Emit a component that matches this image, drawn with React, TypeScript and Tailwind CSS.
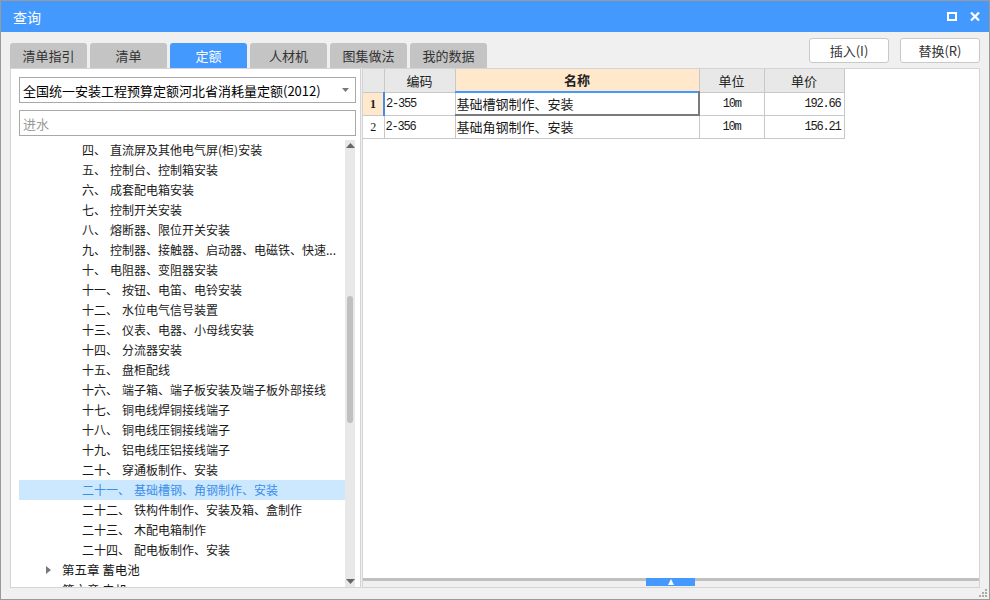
import React from "react";

const tabs = ["清单指引", "清单", "定额", "人材机", "图集做法", "我的数据"];

const tree: [string, string][] = [
  ["四、", "直流屏及其他电气屏(柜)安装"],
  ["五、", "控制台、控制箱安装"],
  ["六、", "成套配电箱安装"],
  ["七、", "控制开关安装"],
  ["八、", "熔断器、限位开关安装"],
  ["九、", "控制器、接触器、启动器、电磁铁、快速..."],
  ["十、", "电阻器、变阻器安装"],
  ["十一、", "按钮、电笛、电铃安装"],
  ["十二、", "水位电气信号装置"],
  ["十三、", "仪表、电器、小母线安装"],
  ["十四、", "分流器安装"],
  ["十五、", "盘柜配线"],
  ["十六、", "端子箱、端子板安装及端子板外部接线"],
  ["十七、", "铜电线焊铜接线端子"],
  ["十八、", "铜电线压铜接线端子"],
  ["十九、", "铝电线压铝接线端子"],
  ["二十、", "穿通板制作、安装"],
  ["二十一、", "基础槽钢、角钢制作、安装"],
  ["二十二、", "铁构件制作、安装及箱、盒制作"],
  ["二十三、", "木配电箱制作"],
  ["二十四、", "配电板制作、安装"],
];

const ui = { fontFamily: '"Noto Sans CJK SC", "Noto Sans", sans-serif' };
const mono = { fontFamily: '"Liberation Mono", "Noto Sans CJK SC", monospace' };

export default function App() {
  return (
    <div
      className="w-[990px] h-[600px] flex flex-col bg-[#f0f0f0] border border-[#9a9a9a] overflow-hidden text-[#1a1a1a]"
      style={ui}
    >
      {/* title bar */}
      <div className="h-[31px] shrink-0 bg-[#4499ff] flex items-center justify-between pl-[12px] pr-[9px]">
        <span className="text-white text-[14px] leading-none">查询</span>
        <div className="flex items-center gap-[13px]">
          <svg width="10" height="9" viewBox="0 0 10 9">
            <rect x="1" y="1" width="8" height="7" fill="none" stroke="white" strokeWidth="2" />
          </svg>
          <svg width="10" height="9" viewBox="0 0 10 9">
            <path d="M1 0.5 L9 8.5 M9 0.5 L1 8.5" stroke="white" strokeWidth="2.2" />
          </svg>
        </div>
      </div>

      {/* tabs + buttons */}
      <div className="h-[36px] shrink-0 flex justify-between pl-[9px] pr-[9px]">
        <div className="flex items-end gap-[3px]">
          {tabs.map((t) => (
            <div
              key={t}
              className={
                "w-[77px] h-[25px] rounded-t-[3px] flex items-center justify-center text-[13px] " +
                (t === "定额" ? "bg-[#4499ff] text-white" : "bg-[#c4c4c4] text-[#333]")
              }
            >
              {t}
            </div>
          ))}
        </div>
        <div className="flex gap-[11px] pt-[6px]">
          <div className="w-[80px] h-[25px] bg-white border border-[#c8c8c8] rounded-[3px] flex items-center justify-center text-[13px] text-[#333]">
            插入(I)
          </div>
          <div className="w-[80px] h-[25px] bg-white border border-[#c8c8c8] rounded-[3px] flex items-center justify-center text-[13px] text-[#333]">
            替换(R)
          </div>
        </div>
      </div>

      {/* main */}
      <div className="h-[520px] shrink-0 flex pl-[9px] pr-[9px] gap-[1px]">
        {/* left panel */}
        <div className="w-[351px] h-full bg-white border border-[#d4d4d4] flex flex-col pl-[8px] pr-[4px] pt-[8px]">
          <div className="h-[26px] shrink-0 border border-[#a8a8a8] flex items-center justify-between pl-[3px] pr-[6px]">
            <span className="text-[13px] text-black leading-none">全国统一安装工程预算定额河北省消耗量定额(2012)</span>
            <svg width="7" height="4" viewBox="0 0 7 4">
              <path d="M0 0 H7 L3.5 4 Z" fill="#777" />
            </svg>
          </div>
          <div className="h-[26px] mt-[7px] shrink-0 border border-[#a8a8a8] flex items-center pl-[3px]">
            <span className="text-[13px] text-[#999] leading-none">进水</span>
          </div>
          <div className="mt-[4px] flex-1 flex overflow-hidden">
            <div className="w-[326px] flex flex-col overflow-hidden">
              {tree.map(([n, t]) => {
                const sel = n === "二十一、";
                return (
                  <div
                    key={n}
                    className={
                      "h-[20px] shrink-0 flex items-center pl-[63px] text-[12px] whitespace-nowrap " +
                      (sel ? "bg-[#cce8ff] text-[#3d8ee8]" : "text-[#1a1a1a]")
                    }
                  >
                    <span>{n}</span>
                    <span className="ml-[4px]">{t}</span>
                  </div>
                );
              })}
              <div className="h-[20px] shrink-0 flex items-center pl-[27px] text-[12.5px] whitespace-nowrap">
                <svg width="5" height="8" viewBox="0 0 5 8" className="mr-[11px]">
                  <path d="M0 0 L5 4 L0 8 Z" fill="#777" />
                </svg>
                第五章 蓄电池
              </div>
              <div className="h-[20px] shrink-0 flex items-center pl-[43px] text-[12.5px] whitespace-nowrap">
                第六章 电机
              </div>
            </div>
            {/* scrollbar */}
            <div className="w-[10px] h-full bg-[#e8e8e8] flex flex-col items-center">
              <svg width="9" height="5" viewBox="0 0 9 5" className="mt-[3px]">
                <path d="M0 5 L4.5 0 L9 5 Z" fill="#666" />
              </svg>
              <div className="mt-[148px] w-[6px] h-[127px] bg-[#c0c0c0] rounded-[3px]" />
              <div className="flex-1" />
              <svg width="9" height="5" viewBox="0 0 9 5" className="mb-[3px]">
                <path d="M0 0 L9 0 L4.5 5 Z" fill="#666" />
              </svg>
            </div>
          </div>
        </div>

        {/* right panel */}
        <div className="flex-1 h-full border border-[#d4d4d4] flex flex-col">
          <div className="flex-1 bg-white">
            <table className="border-collapse text-[13px]" style={{ tableLayout: "fixed" }}>
              <colgroup>
                <col style={{ width: 21 }} />
                <col style={{ width: 71 }} />
                <col style={{ width: 244 }} />
                <col style={{ width: 65 }} />
                <col style={{ width: 80 }} />
              </colgroup>
              <thead>
                <tr className="h-[23px]">
                  <th className="bg-[#e8e8e8] border border-[#c8c8c8] border-t-0 border-l-0 p-0" />
                  <th className="bg-[#e8e8e8] border border-[#c8c8c8] border-t-0 font-normal p-0 text-[#222]">编码</th>
                  <th className="bg-[#ffe8cc] border border-[#c8c8c8] border-t-0 font-bold p-0 text-[#222]">名称</th>
                  <th className="bg-[#e8e8e8] border border-[#c8c8c8] border-t-0 font-normal p-0 text-[#222]">单位</th>
                  <th className="bg-[#e8e8e8] border border-[#c8c8c8] border-t-0 font-normal p-0 text-[#222]">单价</th>
                </tr>
              </thead>
              <tbody>
                <tr className="h-[23px]">
                  <td className="bg-[#ffe8cc] border border-[#c8c8c8] border-l-0 p-0 text-center font-bold text-[12px]" style={{ fontFamily: '"Liberation Serif", serif' }}>1</td>
                  <td className="border border-[#c8c8c8] border-l-2 border-l-[#3d8ee8] p-0 pl-[1px] text-[12px] tracking-[-1.2px]" style={mono}>2-355</td>
                  <td className="p-0 pl-[1px] border-t-2 border-t-[#4499ff] border-l border-l-[#808080] border-r-2 border-r-[#7a7a7a] border-b-2 border-b-[#7a7a7a]">基础槽钢制作、安装</td>
                  <td className="border border-[#c8c8c8] p-0 text-center text-[12px] tracking-[-1.2px]" style={mono}>10m</td>
                  <td className="border border-[#c8c8c8] p-0 pr-[3px] text-right text-[12px] tracking-[-1.2px]" style={mono}>192.66</td>
                </tr>
                <tr className="h-[23px]">
                  <td className="border border-[#c8c8c8] border-l-0 p-0 text-center text-[12px]" style={{ fontFamily: '"Liberation Serif", serif' }}>2</td>
                  <td className="border border-[#c8c8c8] p-0 pl-[1px] text-[12px] tracking-[-1.2px]" style={mono}>2-356</td>
                  <td className="border border-[#c8c8c8] p-0 pl-[1px]">基础角钢制作、安装</td>
                  <td className="border border-[#c8c8c8] p-0 text-center text-[12px] tracking-[-1.2px]" style={mono}>10m</td>
                  <td className="border border-[#c8c8c8] p-0 pr-[3px] text-right text-[12px] tracking-[-1.2px]" style={mono}>156.21</td>
                </tr>
              </tbody>
            </table>
          </div>
          {/* splitter */}
          <div className="h-[3px] shrink-0 bg-[#c0c0c0] flex pl-[283px]">
            <div className="w-[49px] h-[8px] bg-[#4499ff] flex items-center justify-center relative z-10">
              <svg width="6" height="6" viewBox="0 0 6 6">
                <path d="M3 0 L6 6 L0 6 Z" fill="white" />
              </svg>
            </div>
          </div>
          <div className="h-[6px] shrink-0 bg-[#f0f0f0]" />
        </div>
      </div>

      {/* bottom strip */}
      <div className="flex-1 flex justify-end items-end pr-[2px] pb-[2px]">
        <svg width="8" height="8" viewBox="0 0 8 8">
          <rect x="6" y="0" width="2" height="2" fill="#aaa" />
          <rect x="3" y="3" width="2" height="2" fill="#aaa" />
          <rect x="6" y="3" width="2" height="2" fill="#aaa" />
          <rect x="0" y="6" width="2" height="2" fill="#aaa" />
          <rect x="3" y="6" width="2" height="2" fill="#aaa" />
          <rect x="6" y="6" width="2" height="2" fill="#aaa" />
        </svg>
      </div>
    </div>
  );
}
